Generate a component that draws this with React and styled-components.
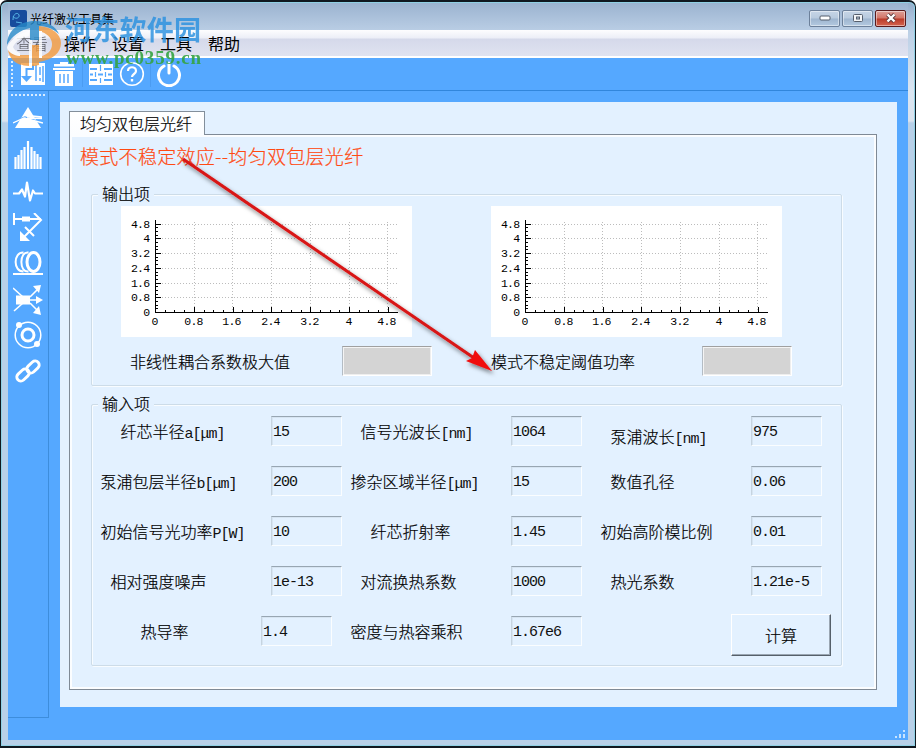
import React from "react";
import styled, { createGlobalStyle } from "styled-components";

const Global = createGlobalStyle`
  * { box-sizing: border-box; }
  body { margin: 0; overflow: hidden; font-family: "Noto Sans CJK SC", sans-serif; font-weight: 300; color: #000; }
`;

const Window = styled.div`
  position: relative;
  width: 916px;
  height: 748px;
  display: flex;
  flex-direction: column;
  background: linear-gradient(#93acc9 0, #a9bfda 14px, #bcd0e6 30px, #dbe6f2 90px, #dbe3ee 119px, #b8d0e8 121px);
  border: solid #101820;
  border-width: 2px 1px 2px 1px;
  border-radius: 7px 7px 0 0;
  padding: 1px 7px 6px;
  box-shadow: inset 0 0 0 1px #8fd0e4;
`;

const TitleBar = styled.header`
  height: 27px;
  flex: none;
  display: flex;
  align-items: center;
  background: linear-gradient(#9bb3d0, #b9cde4);
`;
const AppIcon = styled.svg`
  width: 17px;
  height: 17px;
  margin: 3px 0 0 2px;
`;
const Title = styled.span`
  flex: 1;
  margin: 3px 0 0 3px;
  font-size: 12px;
  font-weight: 400;
`;
const Controls = styled.div`
  display: flex;
  gap: 2px;
  margin: 3px 2px 0 0;
`;
const Control = styled.button`
  width: 31px;
  height: 17px;
  padding: 0;
  display: grid;
  place-items: center;
  border-radius: 2px;
  border: 1px solid ${(p) => (p.$close ? "#5a1a1c" : "#6c809a")};
  background: ${(p) =>
    p.$close
      ? "linear-gradient(#dda098, #d37467 48%, #b93a28 52%, #d56450)"
      : "linear-gradient(#c6d5e6, #b8cade 48%, #9eb5cf 52%, #b3c9e0)"};
  box-shadow: inset 0 0 0 1px rgba(255, 255, 255, 0.45);
`;

const MenuBar = styled.nav`
  height: 28px;
  flex: none;
  display: flex;
  align-items: center;
  gap: 16px;
  padding: 0 0 0 8px;
  background: linear-gradient(#fdfdfe, #eceef7 8px, #d5d9ea 9px, #dfe2f0 25px);
  border-bottom: 2px solid #fff;
`;
const MenuItem = styled.span`
  font-size: 16px;
  line-height: 24px;
  font-weight: ${(p) => (p.$dim ? 300 : 400)};
  opacity: ${(p) => (p.$dim ? 0.6 : 1)};
`;

const Toolbar = styled.div`
  height: 33px;
  flex: none;
  display: flex;
  align-items: center;
  background: #55a8ff;
  border-bottom: 1px solid #3186dc;
`;
const Handle = styled.i`
  background-image: radial-gradient(circle, #d9ecff 1px, transparent 1.4px);
  background-size: 4px 4px;
  width: ${(p) => (p.$vertical ? 4 : 36)}px;
  height: ${(p) => (p.$vertical ? 28 : 4)}px;
  margin-left: ${(p) => (p.$vertical ? 2 : 0)}px;
`;
const ToolIcon = styled.svg`
  flex: none;
  width: 26px;
  height: 26px;
  margin-left: ${(p) => p.$gap}px;
`;
const ToolDivider = styled.i`
  width: 1px;
  height: 26px;
  margin-left: 5px;
  background: #4b9cf2;
`;

const Body = styled.div`
  flex: 1;
  min-height: 0;
  display: flex;
  background: #55a8ff;
`;
const SideBar = styled.aside`
  width: 41px;
  height: 627px;
  display: flex;
  flex-direction: column;
  align-items: center;
  border: solid #3d8ddc;
  border-width: 0 1px 1px 0;
  padding-top: 2px;
`;
const SideIcons = styled.div`
  display: flex;
  flex-direction: column;
  gap: 6px;
  margin-top: 8px;
`;
const SideIcon = styled.svg`
  display: block;
  width: 30px;
  height: 30px;
`;

const Page = styled.main`
  width: 837px;
  height: 605px;
  margin: 11px 0 0 11px;
  padding: 9px 0 0 9px;
  background: #e3f1ff;
`;
const Tab = styled.div`
  position: relative;
  width: 136px;
  height: 24px;
  padding-left: 10px;
  font-size: 16px;
  line-height: 22px;
  background: linear-gradient(#fff, #fbfdff);
  border: 1px solid #838f9b;
  border-bottom: 0;
  margin-bottom: -1px;
  -webkit-text-stroke: 0.2px #000;
`;
const Pane = styled.section`
  width: 808px;
  height: 556px;
  border: 1px solid #7f8a96;
  box-shadow: inset 0 0 0 2px #fbfdff;
  padding: 0 0 0 21px;
`;
const Heading = styled.h1`
  margin: 0 0 0 -11px;
  padding-top: 8px;
  height: 59px;
  font-size: 19px;
  letter-spacing: 0.3px;
  line-height: 26px;
  font-weight: 300;
  color: #ff4a12;
  -webkit-text-stroke: 0.2px #ff4a12;
  white-space: nowrap;
`;
const Group = styled.section`
  width: 751px;
  height: ${(p) => p.$height}px;
  margin-bottom: 18px;
  border: 1px solid #cddce8;
  border-radius: 2px;
  box-shadow: inset 1px 1px 0 #f8fcff, 1px 1px 0 #f8fcff;
  -webkit-text-stroke: 0.2px #000;
`;
const Legend = styled.h2`
  width: 56px;
  height: 24px;
  margin: -13px 0 0 6px;
  padding-left: 4px;
  font-size: 16px;
  line-height: 23px;
  font-weight: 300;
  background: #e3f1ff;
  white-space: nowrap;
`;

const Plots = styled.div`
  display: flex;
  gap: 79px;
  margin-left: 29px;
`;
const Plot = styled.svg`
  display: block;
  width: 291px;
  height: 131px;
  background: #fff;
  -webkit-text-stroke: 0;
  text { font: 11.5px "Liberation Mono", monospace; letter-spacing: -0.7px; fill: #000; }
`;
const Results = styled.div`
  display: flex;
  margin: 9px 0 0 38px;
`;
const ResultLabel = styled.label`
  width: ${(p) => p.$width}px;
  padding-left: ${(p) => p.$indent || 0}px;
  font-size: 16px;
  line-height: 30px;
`;
const Result = styled.output`
  width: 90px;
  height: 30px;
  margin-right: ${(p) => p.$after}px;
  background: #d4d4d4;
  border: 1px solid;
  border-color: #a0a0a0 #fff #fff #b4bcc4;
  box-shadow: inset 1px 1px 0 #f4f4f4, inset -1px -1px 0 #eee;
`;

const Row = styled.div`
  display: flex;
  height: 30px;
  margin-bottom: 20px;
`;
const Label = styled.label`
  width: ${(p) => p.$width}px;
  padding-left: ${(p) => p.$indent - 0.5}px;
  padding-top: ${(p) => p.$drop || 0}px;
  font-size: 16px;
  line-height: 30px;
  white-space: nowrap;
`;
const Latin = styled.span`
  font: 15px/20px "Liberation Mono", monospace;
  letter-spacing: -1px;
  color: #101010;
  -webkit-text-stroke: 0;
`;
const Field = styled.input`
  width: 71px;
  height: 30px;
  padding: 3px 0 0 1px;
  font: 15px "Liberation Mono", monospace;
  letter-spacing: -1px;
  color: #101010;
  -webkit-text-stroke: 0;
  background: transparent;
  border: 1px solid;
  border-color: #98a6b2 #fafdff #fafdff #c6d4e0;
  box-shadow: inset 1px 1px 0 #d7e5f2;
  border-radius: 0;
  outline: 0;
`;
const Calculate = styled.button`
  width: 100px;
  height: 42px;
  margin: -2px 0 0 149px;
  color: #000;
  font: 300 16px "Noto Sans CJK SC", sans-serif;
  -webkit-text-stroke: 0.2px #000;
  background: #e3f1ff;
  border: 1px solid;
  border-color: #fff #56606a #56606a #fff;
  box-shadow: inset -1px -1px 0 #9aa6b2;
  border-radius: 0;
  padding: 0;
`;
const Overlay = styled.svg`
  position: absolute;
  left: -1px;
  top: -2px;
  width: 916px;
  height: 748px;
  pointer-events: none;
`;
const Brand = styled.text`
  font: 700 27px "Noto Sans CJK SC", sans-serif;
  fill: #2a91e0;
  opacity: 0.82;
`;
const Site = styled.text`
  font: bold 19px "Liberation Serif", serif;
  fill: #35a443;
  opacity: 0.9;
`;

const xs = [[34, "0"], [73, "0.8"], [111, "1.6"], [150, "2.4"], [189, "3.2"], [228, "4"], [266, "4.8"]];
const ys = [[106, "0"], [91, "0.8"], [77, "1.6"], [62, "2.4"], [47, "3.2"], [32, "4"], [18, "4.8"]];

function Chart() {
  return (
    <Plot viewBox="0 0 291 131" shapeRendering="crispEdges">
      <g stroke="#bcbcbc" strokeDasharray="1 2">
        {xs.slice(1).map(([x]) => <path key={x} d={`M${x + 0.5} 16V106`} />)}
        {ys.slice(1).map(([y]) => <path key={y} d={`M35 ${y + 0.5}H277`} />)}
      </g>
      <path d="M34.5 14V106.5H277" fill="none" stroke="#000" />
      <g stroke="#000">
        {Array.from({ length: 25 }, (_, i) => {
          const x = Math.round(34 + i * 9.7) + 0.5;
          const y = Math.round(106 - i * 3.68) + 0.5;
          return <path key={i} d={`M${x} 106v${i % 4 ? -2 : -5}M35 ${y}h${i % 4 ? 2 : 5}`} />;
        })}
      </g>
      {xs.map(([x, t]) => <text key={t} x={x - 0.5} y="119" textAnchor="middle">{t}</text>)}
      {ys.map(([y, t]) => <text key={t} x="28.5" y={y + 4} textAnchor="end">{t}</text>)}
    </Plot>
  );
}

const rows = [
  [["纤芯半径", "a[μm]", "15", 179, 29], ["信号光波长", "[nm]", "1064", 169, 19], ["泵浦波长", "[nm]", "975", 169, 29, 5]],
  [["泵浦包层半径", "b[μm]", "200", 179, 9], ["掺杂区域半径", "[μm]", "15", 169, 9], ["数值孔径", "", "0.06", 169, 29]],
  [["初始信号光功率", "P[W]", "10", 179, 9], ["纤芯折射率", "", "1.45", 169, 29], ["初始高阶模比例", "", "0.01", 169, 19]],
  [["相对强度噪声", "", "1e-13", 179, 19], ["对流换热系数", "", "1000", 169, 19], ["热光系数", "", "1.21e-5", 169, 29]],
  [["热导率", "", "1.4", 169, 49], ["密度与热容乘积", "", "1.67e6", 179, 19]],
];

export default function App() {
  return (
    <>
      <Global />
      <Window>
        <TitleBar>
          <AppIcon viewBox="0 0 17 17">
            <rect width="17" height="17" rx="2" fill="#174b9d" />
            <path d="M3 10C3 3 8 2 9 5S5 10 3 6M6 12l6 1" stroke="#58b8e8" fill="none" />
          </AppIcon>
          <Title>光纤激光工具集</Title>
          <Controls>
            <Control><svg width="12" height="6"><rect x="1" y="1" width="10" height="4" rx="1" fill="#fff" stroke="#555e6c" /></svg></Control>
            <Control><svg width="12" height="10"><rect x="1.5" y="1.5" width="9" height="7" rx="1" fill="#f4f6f8" stroke="#555e6c" /><rect x="4.5" y="4" width="3" height="2" fill="#b8c8da" stroke="#555e6c" /></svg></Control>
            <Control $close><svg width="12" height="10"><path d="M2.5 1.5l7 7m0-7l-7 7" stroke="#59393d" strokeWidth="4" /><path d="M2.5 1.5l7 7m0-7l-7 7" stroke="#fff" strokeWidth="2.4" /></svg></Control>
          </Controls>
        </TitleBar>
        <MenuBar>
          <MenuItem $dim>查看</MenuItem>
          <MenuItem>操作</MenuItem>
          <MenuItem>设置</MenuItem>
          <MenuItem>工具</MenuItem>
          <MenuItem>帮助</MenuItem>
        </MenuBar>
        <Toolbar>
          <Handle $vertical />
          <ToolIcon $gap={6} viewBox="0 0 26 26">
            <path fill="#fff" d="M1 2h24v22H1z" />
            <path d="M13 3.500V8H6.500v8" stroke="#55a8ff" strokeWidth="2" fill="none" />
            <path d="M1 15h11l-5.500 6z" fill="#55a8ff" />
            <path d="M16 4v16M20 6v8M20 17v3M23 5v16" stroke="#55a8ff" strokeWidth="1.500" fill="none" />
          </ToolIcon>
          <ToolIcon $gap={5} viewBox="0 0 26 26">
            <path fill="#fff" d="M9 1h8v2h6v2.500H3V3h6zM2 7h22v2H2zM4 10h18v15H4z" />
            <path d="M9 13v9M13 13v9M17 13v9" stroke="#55a8ff" strokeWidth="1.500" />
          </ToolIcon>
          <ToolDivider />
          <ToolIcon $gap={5} viewBox="0 0 26 26">
            <path fill="#fff" d="M1 3h24v21H1z" />
            <path d="M2 8h7M16 8h8M2 13.500h3M10 13.500h5M20 13.500h4M2 19h7M16 19h8" stroke="#55a8ff" strokeWidth="2" />
            <path d="M12.500 4v6M7.500 11v5M17.500 11v5M12.500 17v5" stroke="#55a8ff" strokeWidth="1.200" />
          </ToolIcon>
          <ToolIcon $gap={5} viewBox="0 0 26 26" fill="none" stroke="#fff">
            <circle cx="13" cy="13" r="11.300" strokeWidth="1.600" />
            <path d="M9 10c0-5 8-5 8 0 0 3-4 3-4 6" strokeWidth="2.200" /><path d="M13 18v2.500" strokeWidth="2.400" />
          </ToolIcon>
          <ToolDivider />
          <ToolIcon $gap={5} viewBox="0 0 26 26" fill="none" stroke="#fff" strokeWidth="3" strokeLinecap="round">
            <path d="M8 5a10.500 10.500 0 1 0 10 0M13 2v10" />
          </ToolIcon>
        </Toolbar>
        <Body>
          <SideBar>
            <Handle />
            <SideIcons>
              <SideIcon viewBox="0 0 30 30">
                <path fill="#fff" d="M15 2l13 21H2z" />
                <path d="M0 16.500l12-4.500 18 6" stroke="#55a8ff" strokeWidth="1.200" fill="none" />
                <path d="M0 18l11-5 19 5M14 10.500l15 1.500M14 13l15 .5" stroke="#fff" strokeWidth="1.300" fill="none" />
              </SideIcon>
              <SideIcon viewBox="0 0 30 30">
                <path d="M2.500 28V16M5.500 28V14M8.500 28V9M11.500 28V6M15 28V0M18.500 28V6M21.500 28V10M24.500 28V13M27.500 28V16" stroke="#fff" strokeWidth="2.200" />
              </SideIcon>
              <SideIcon viewBox="0 0 30 30" fill="none" stroke="#fff" strokeWidth="2.200" strokeLinejoin="round">
                <path d="M0 16.500h6l3-4 3 7 2-14 3 18 3-10 2 3h8" />
              </SideIcon>
              <SideIcon viewBox="0 0 30 30" fill="none" stroke="#fff" strokeWidth="2">
                <path d="M1 0v12M1 6h27M21 0l7 7-19 19M12 14l9 9" />
                <path d="M9 6h8" strokeWidth="5" /><path d="M7 18v10h10z" fill="#fff" stroke="none" />
              </SideIcon>
              <SideIcon viewBox="0 0 30 30" fill="none" stroke="#fff" strokeWidth="2">
                <ellipse cx="20.500" cy="13" rx="6.500" ry="9.500" strokeWidth="3" /><path d="M15.500 3.500C6 2 6 24 15.500 22.500M10.500 3.500C0 3 0 23 10.500 22.500M0 25h30" />
              </SideIcon>
              <SideIcon viewBox="0 0 30 30" stroke="#fff" fill="#fff" strokeWidth="1.600">
                <path d="M0 3l10 9M1 26l9-8M17 12l9-9M17 15h10M17 18l8 8" fill="none" />
                <path stroke="none" d="M3 10.500h14v9H3zM20 1l8-1-2 8zM23 11l7 4-7 4zM26 21l2 9-8-2z" />
              </SideIcon>
              <SideIcon viewBox="0 0 30 30" fill="none" stroke="#fff">
                <circle cx="15" cy="14" r="12.800" strokeWidth="1.500" /><circle cx="15" cy="14" r="6" strokeWidth="3" />
                <circle cx="6" cy="4" r="3" fill="#fff" stroke="none" /><circle cx="24" cy="23" r="3" fill="#fff" stroke="none" />
              </SideIcon>
              <SideIcon viewBox="0 0 30 30" fill="none" stroke="#fff" strokeWidth="2.900">
                <rect x="3" y="14" width="14" height="8" rx="4" transform="rotate(-43 10 18)" />
                <rect x="13" y="6" width="14" height="8" rx="4" transform="rotate(-43 20 10)" />
              </SideIcon>
            </SideIcons>
          </SideBar>
          <Page>
            <Tab>均匀双包层光纤</Tab>
            <Pane>
              <Heading>模式不稳定效应--均匀双包层光纤</Heading>
              <Group $height={192}>
                <Legend>输出项</Legend>
                <Plots><Chart /><Chart /></Plots>
                <Results>
                  <ResultLabel $width={212}>非线性耦合系数极大值</ResultLabel>
                  <Result $after={58} />
                  <ResultLabel $width={212} $indent={1}>模式不稳定阈值功率</ResultLabel>
                  <Result $after={0} />
                </Results>
              </Group>
              <Group $height={262}>
                <Legend>输入项</Legend>
                {rows.map((cells, i) => (
                  <Row key={i}>
                    {cells.map(([name, unit, value, width, indent, drop]) => (
                      <React.Fragment key={name}>
                        <Label $width={width} $indent={indent} $drop={drop}>{name}<Latin>{unit}</Latin></Label>
                        <Field defaultValue={value} />
                      </React.Fragment>
                    ))}
                    {i === 4 && <Calculate>计算</Calculate>}
                  </Row>
                ))}
              </Group>
            </Pane>
          </Page>
        </Body>
        <Overlay viewBox="0 0 916 748">
          <defs><filter id="shade" x="-10%" y="-10%" width="120%" height="120%"><feDropShadow dx="2" dy="3" stdDeviation="2" floodOpacity=".5" /></filter></defs>
          <g opacity=".8">
            <path d="M7 45C7 30 20 21 35 21c13 0 21 6 24 13-7-6-13-8-20-8v14h-9V28C20 30 12 36 7 45z" fill="#2789c8" />
            <path d="M7 47c5-9 13-14 22-16v5c-8 2-14 6-16 11 1 3 4 5 7 6v4C12 56 7 52 7 47z" fill="#fff" />
            <path d="M39 26c13 1 22 8 22 17 0 10-9 17-22 19v-5c8-2 13-6 13-13 0-6-5-11-13-13zM8 50c3 4 8 6 13 6v9c-7-2-12-8-13-15z" fill="#f39a3c" />
            <path d="M20 55h9v11c-4 0-7-1-9-2zM31 45h8v20c-3 1-6 1-8 1z" fill="#f39a3c" />
            <path d="M29 40h3v26h-3zM39 31h3v27h-3z" fill="#fff" />
          </g>
          <Brand x="65" y="40" textLength="136">河东软件园</Brand>
          <Site x="66" y="64" textLength="135">www.pc0359.cn</Site>
          <g filter="url(#shade)">
            <path d="M183 159L474 358" stroke="#d81414" strokeWidth="3" />
            <path d="M492 371l-26-10 6-3 3-8z" fill="#f00c0c" />
          </g>
          <path fill="#c8e4ff" d="M903 730h2v2h-2zM899 734h2v2h-2zM903 734h2v2h-2zM895 738h2v-2h-2zM899 738h2v-2h-2zM903 738h2v-2h-2z" />
        </Overlay>
      </Window>
    </>
  );
}
